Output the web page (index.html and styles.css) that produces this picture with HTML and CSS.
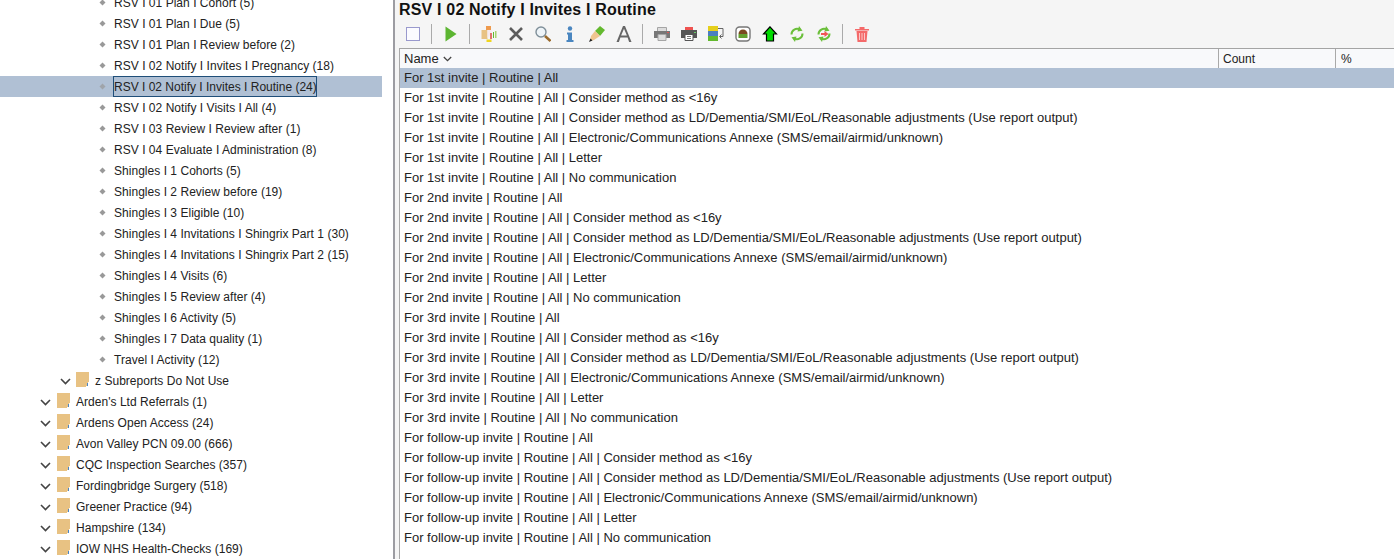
FILE: index.html
```html
<!DOCTYPE html>
<html lang="en">
<head>
<meta charset="utf-8">
<title>RSV I 02 Notify I Invites I Routine</title>
<link rel="stylesheet" href="styles.css">
</head>
<body>
<svg class="defs" width="0" height="0" aria-hidden="true">
  <symbol id="chev" viewBox="0 0 11 7"><path d="M1 1l4.500 4.500L10 1" fill="none" stroke="#444" stroke-width="1.600"/></symbol>
  <symbol id="folder" viewBox="0 0 13 15"><path d="M0 0h13v15H0z" fill="#e8c283"/><path d="M12 10h1v5h-3v-1h2z" fill="#fff"/><path d="M11 11h1v3h-1z" fill="#4a86c8"/></symbol>
  <symbol id="bullet" viewBox="0 0 7 7"><path d="M3.500 0.500L6.500 3.500L3.500 6.500L0.500 3.500z" fill="#999"/></symbol>
</svg>
<div class="app">
  <nav class="tree">
    <div class="tree-list">
      <div class="row leaf"><svg class="bullet"><use href="#bullet"/></svg><span class="label">RSV I 01 Plan I Cohort (5)</span></div>
      <div class="row leaf"><svg class="bullet"><use href="#bullet"/></svg><span class="label">RSV I 01 Plan I Due (5)</span></div>
      <div class="row leaf"><svg class="bullet"><use href="#bullet"/></svg><span class="label">RSV I 01 Plan I Review before (2)</span></div>
      <div class="row leaf"><svg class="bullet"><use href="#bullet"/></svg><span class="label">RSV I 02 Notify I Invites I Pregnancy (18)</span></div>
      <div class="row leaf selected"><svg class="bullet"><use href="#bullet"/></svg><span class="label">RSV I 02 Notify I Invites I Routine (24)</span></div>
      <div class="row leaf"><svg class="bullet"><use href="#bullet"/></svg><span class="label">RSV I 02 Notify I Visits I All (4)</span></div>
      <div class="row leaf"><svg class="bullet"><use href="#bullet"/></svg><span class="label">RSV I 03 Review I Review after (1)</span></div>
      <div class="row leaf"><svg class="bullet"><use href="#bullet"/></svg><span class="label">RSV I 04 Evaluate I Administration (8)</span></div>
      <div class="row leaf"><svg class="bullet"><use href="#bullet"/></svg><span class="label">Shingles I 1 Cohorts (5)</span></div>
      <div class="row leaf"><svg class="bullet"><use href="#bullet"/></svg><span class="label">Shingles I 2 Review before (19)</span></div>
      <div class="row leaf"><svg class="bullet"><use href="#bullet"/></svg><span class="label">Shingles I 3 Eligible (10)</span></div>
      <div class="row leaf"><svg class="bullet"><use href="#bullet"/></svg><span class="label">Shingles I 4 Invitations I Shingrix Part 1 (30)</span></div>
      <div class="row leaf"><svg class="bullet"><use href="#bullet"/></svg><span class="label">Shingles I 4 Invitations I Shingrix Part 2 (15)</span></div>
      <div class="row leaf"><svg class="bullet"><use href="#bullet"/></svg><span class="label">Shingles I 4 Visits (6)</span></div>
      <div class="row leaf"><svg class="bullet"><use href="#bullet"/></svg><span class="label">Shingles I 5 Review after (4)</span></div>
      <div class="row leaf"><svg class="bullet"><use href="#bullet"/></svg><span class="label">Shingles I 6 Activity (5)</span></div>
      <div class="row leaf"><svg class="bullet"><use href="#bullet"/></svg><span class="label">Shingles I 7 Data quality (1)</span></div>
      <div class="row leaf"><svg class="bullet"><use href="#bullet"/></svg><span class="label">Travel I Activity (12)</span></div>
      <div class="row sub"><svg class="chev"><use href="#chev"/></svg><svg class="folder"><use href="#folder"/></svg><span class="label">z Subreports Do Not Use</span></div>
      <div class="row top"><svg class="chev"><use href="#chev"/></svg><svg class="folder"><use href="#folder"/></svg><span class="label">Arden's Ltd Referrals (1)</span></div>
      <div class="row top"><svg class="chev"><use href="#chev"/></svg><svg class="folder"><use href="#folder"/></svg><span class="label">Ardens Open Access (24)</span></div>
      <div class="row top"><svg class="chev"><use href="#chev"/></svg><svg class="folder"><use href="#folder"/></svg><span class="label">Avon Valley PCN 09.00 (666)</span></div>
      <div class="row top"><svg class="chev"><use href="#chev"/></svg><svg class="folder"><use href="#folder"/></svg><span class="label">CQC Inspection Searches (357)</span></div>
      <div class="row top"><svg class="chev"><use href="#chev"/></svg><svg class="folder"><use href="#folder"/></svg><span class="label">Fordingbridge Surgery (518)</span></div>
      <div class="row top"><svg class="chev"><use href="#chev"/></svg><svg class="folder"><use href="#folder"/></svg><span class="label">Greener Practice (94)</span></div>
      <div class="row top"><svg class="chev"><use href="#chev"/></svg><svg class="folder"><use href="#folder"/></svg><span class="label">Hampshire (134)</span></div>
      <div class="row top"><svg class="chev"><use href="#chev"/></svg><svg class="folder"><use href="#folder"/></svg><span class="label">IOW NHS Health-Checks (169)</span></div>
    </div>
  </nav>
  <main class="main">
    <h1 class="title">RSV I 02 Notify I Invites I Routine</h1>
    <div class="toolbar">
      <button class="tool"><svg viewBox="0 0 16 16"><rect x="1.500" y="1.500" width="13" height="13" fill="#fbfbff" stroke="#3a3aa0" stroke-dasharray="1 1"/></svg></button>
      <span class="sep"></span>
      <button class="tool"><svg viewBox="0 0 16 16"><path d="M2.500 0.500L13.500 8 2.500 15.500z" fill="#5cb531"/></svg></button>
      <span class="sep"></span>
      <button class="tool"><svg viewBox="0 0 16 16"><path d="M0.500 4h6v9h-6z" fill="#e8c283"/><path d="M5 0h5v4H5z" fill="#ee9a4d"/><path d="M6.500 4h4v3l-4 5z" fill="#f6e9ee"/><path d="M9 7h2v6H9z" fill="#e0746c"/><path d="M12 6h1v6h-1z" fill="#63b92e"/><path d="M14 5h1.500v7H14z" fill="#a8d46f"/><path d="M5.500 13.500h5V16h-5z" fill="#f0d51d"/></svg></button>
      <button class="tool"><svg viewBox="0 0 16 16"><path d="M2 2l12 12M14 2L2 14" stroke="#5c5c5c" stroke-width="2.600" fill="none"/></svg></button>
      <button class="tool"><svg viewBox="0 0 16 16"><circle cx="6" cy="6" r="5" fill="#eef4f8" stroke="#7f8f99" stroke-width="1.400"/><path d="M10 10l5.500 5" stroke="#9a6a2c" stroke-width="2.600"/></svg></button>
      <button class="tool"><svg viewBox="0 0 16 16"><circle cx="8" cy="2.500" r="2.200" fill="#4a86c0"/><path d="M5 6.500h5V14h1.500v2h-7v-2H6V8.500H5z" fill="#4a86c0"/></svg></button>
      <button class="tool"><svg viewBox="0 0 16 16"><path d="M11 0l5 4-5 6-5-5z" fill="#63b92e"/><path d="M6 5l5 5-6 4-4 1 1-5z" fill="#efc58f"/><path d="M1.500 12.500L3.500 14.500 0 16z" fill="#222"/></svg></button>
      <button class="tool"><svg viewBox="0 0 16 16"><path d="M0.500 16L7 0h2l6.500 16h-2.400l-1.500-4.500H4.400L2.900 16zM5.100 9.500h5.800L8 2.800z" fill="#666"/></svg></button>
      <span class="sep"></span>
      <button class="tool"><svg viewBox="0 0 16 16"><path d="M3.500 1.500h9v4h-9z" fill="#ddd" stroke="#a5a5a5"/><path d="M0 5h16v7H0z" fill="#777"/><path d="M4 8.500h8v6H4z" fill="#ddd" stroke="#a5a5a5"/><path d="M13 6h2v1h-2z" fill="#d55"/></svg></button>
      <button class="tool"><svg viewBox="0 0 16 16"><path d="M4 1h8v3H4z" fill="#ef5350"/><path d="M0 4h16v8H0z" fill="#555"/><path d="M4 8.500h8v6H4z" fill="#fff" stroke="#555"/><path d="M6 10.500h4M6 12.500h4" stroke="#777"/><path d="M13 6h2v1h-2z" fill="#6c6"/></svg></button>
      <button class="tool"><svg viewBox="0 0 16 16"><path d="M0 0h10v5H0z" fill="#e5cf1c"/><path d="M0 5h10v5H0z" fill="#4a7fc0"/><path d="M0 10h10v5H0z" fill="#63b92e"/><path d="M10 2.500h5v8h-3" fill="none" stroke="#666"/><path d="M13.500 8.500l-2 2 2 2" fill="none" stroke="#666"/></svg></button>
      <button class="tool"><svg viewBox="0 0 16 16"><rect x="1" y="1" width="14" height="14" rx="3.500" fill="#fff" stroke="#777" stroke-width="1.400"/><path d="M3.500 8a4.500 4.500 0 0 1 9 0z" fill="#7a4a20"/><path d="M3.500 8h9v4h-9z" fill="#63a02e"/></svg></button>
      <button class="tool"><svg viewBox="0 0 16 16"><path d="M8 0.800L14.500 8H11.500V15H4.500V8H1.500z" fill="#0d0" stroke="#000" stroke-width="1.200"/></svg></button>
      <button class="tool"><svg viewBox="0 0 16 16"><path d="M2.500 8.500a5.500 5.500 0 0 1 8.500-4.800M13.500 7.500a5.500 5.500 0 0 1-8.500 4.800" fill="none" stroke="#6bbf3a" stroke-width="2"/><path d="M10 0l3.500 4.800-5 .7zM6 16l-3.500-4.800 5-.7z" fill="#6bbf3a"/></svg></button>
      <button class="tool"><svg viewBox="0 0 16 16"><path d="M2.500 8.500a5.500 5.500 0 0 1 8.500-4.800M13.500 7.500a5.500 5.500 0 0 1-8.500 4.800" fill="none" stroke="#6bbf3a" stroke-width="2"/><path d="M10 0l3.500 4.800-5 .7zM6 16l-3.500-4.800 5-.7z" fill="#6bbf3a"/><path d="M5 7h3.500V5l4 3-4 3V9H5z" fill="#f25555"/></svg></button>
      <span class="sep"></span>
      <button class="tool"><svg viewBox="0 0 16 16"><path d="M1 3h14v1.500H1zM5.500 1h5v2h-5z" fill="#f46a6a"/><path d="M2.500 5h11l-1 11h-9z" fill="#f46a6a"/><path d="M5.500 7v7M8 7v7M10.500 7v7" stroke="#fbc8c8" stroke-width="1"/></svg></button>
    </div>
    <section class="table">
      <div class="thead">
        <div class="th th-name">Name <svg class="sort"><use href="#chev"/></svg></div>
        <div class="th th-count">Count</div>
        <div class="th th-pct">%</div>
      </div>
      <div class="tr active">For 1st invite | Routine | All</div>
      <div class="tr">For 1st invite | Routine | All | Consider method as &lt;16y</div>
      <div class="tr">For 1st invite | Routine | All | Consider method as LD/Dementia/SMI/EoL/Reasonable adjustments (Use report output)</div>
      <div class="tr">For 1st invite | Routine | All | Electronic/Communications Annexe (SMS/email/airmid/unknown)</div>
      <div class="tr">For 1st invite | Routine | All | Letter</div>
      <div class="tr">For 1st invite | Routine | All | No communication</div>
      <div class="tr">For 2nd invite | Routine | All</div>
      <div class="tr">For 2nd invite | Routine | All | Consider method as &lt;16y</div>
      <div class="tr">For 2nd invite | Routine | All | Consider method as LD/Dementia/SMI/EoL/Reasonable adjustments (Use report output)</div>
      <div class="tr">For 2nd invite | Routine | All | Electronic/Communications Annexe (SMS/email/airmid/unknown)</div>
      <div class="tr">For 2nd invite | Routine | All | Letter</div>
      <div class="tr">For 2nd invite | Routine | All | No communication</div>
      <div class="tr">For 3rd invite | Routine | All</div>
      <div class="tr">For 3rd invite | Routine | All | Consider method as &lt;16y</div>
      <div class="tr">For 3rd invite | Routine | All | Consider method as LD/Dementia/SMI/EoL/Reasonable adjustments (Use report output)</div>
      <div class="tr">For 3rd invite | Routine | All | Electronic/Communications Annexe (SMS/email/airmid/unknown)</div>
      <div class="tr">For 3rd invite | Routine | All | Letter</div>
      <div class="tr">For 3rd invite | Routine | All | No communication</div>
      <div class="tr">For follow-up invite | Routine | All</div>
      <div class="tr">For follow-up invite | Routine | All | Consider method as &lt;16y</div>
      <div class="tr">For follow-up invite | Routine | All | Consider method as LD/Dementia/SMI/EoL/Reasonable adjustments (Use report output)</div>
      <div class="tr">For follow-up invite | Routine | All | Electronic/Communications Annexe (SMS/email/airmid/unknown)</div>
      <div class="tr">For follow-up invite | Routine | All | Letter</div>
      <div class="tr">For follow-up invite | Routine | All | No communication</div>
    </section>
  </main>
</div>
</body>
</html>
```
FILE: styles.css
```css
* { box-sizing: border-box; }
html, body { margin: 0; height: 100%; overflow: hidden; }
body { font: 12px "Liberation Sans", Arial, sans-serif; color: #222; background: #fff; }
.defs { display: block; height: 0; }
.app { display: flex; height: 559px; overflow: hidden; }

.tree { width: 395px; flex: none; border-right: 2px solid #9c9ca2; background: #fff; overflow: hidden; }
.tree-list { width: 382px; margin-top: -8px; letter-spacing: .03px; }
.row { display: flex; align-items: center; height: 21px; white-space: nowrap; }
.leaf { padding-left: 99px; }
.sub { padding-left: 60px; }
.top { padding-left: 40px; }
.bullet { width: 7px; height: 7px; flex: none; margin-right: 7px; margin-top: -1px; }
.chev { width: 11px; height: 7px; flex: none; margin-top: 2px; }
.folder { width: 13px; height: 15px; flex: none; margin-left: 6px; margin-right: 6px; margin-top: -2px; }
.sub .folder { margin-left: 5px; }
.label { display: block; line-height: 19px; padding-top: 2px; }
.leaf .label { margin-left: 1px; }
.selected { background: #b0c0d4; }
.selected .label { outline: 1px solid #1f4e79; outline-offset: -1px; height: 21px; line-height: 20px; margin-left: 0; padding: 1px 0 0 1px; letter-spacing: 0; }
.selected .bullet { opacity: .7; }

.main { flex: 1; min-width: 0; display: flex; flex-direction: column; background: #f5f5f5; }
.title { margin: 0; padding-left: 4px; height: 22px; font-size: 16px; line-height: 19px; font-weight: 700; letter-spacing: .18px; color: #111; white-space: nowrap; }
.toolbar { display: flex; align-items: center; height: 26px; padding: 0 0 2px 4px; }
.tool { width: 27px; height: 24px; padding: 0; border: 0; background: none; display: flex; align-items: center; justify-content: center; }
.tool svg { width: 16px; height: 16px; display: block; }
.sep { width: 1px; height: 20px; margin: 0 5px; background: #aaa; flex: none; }

.table { margin-left: 4px; flex: 1; font-size: 13px; background: #fff; border-top: 1px solid #a4a4a4; border-left: 1px solid #a9a9a9; overflow: hidden; }
.thead { display: flex; height: 19px; background: #f8f9fb; }
.th { display: flex; align-items: center; height: 19px; padding-left: 4px; color: #222; }
.th-name { width: 818px; }
.th-count { width: 117px; border-left: 1px solid #a9a9a9; font-size: 12px; }
.th-pct { flex: 1; border-left: 1px solid #a9a9a9; padding-left: 5px; font-size: 12px; }
.sort { width: 9px; height: 6px; margin-left: 4px; }
.tr { height: 20px; line-height: 20px; padding-left: 4px; white-space: nowrap; }
.active { background: #b0c0d4; }
```
